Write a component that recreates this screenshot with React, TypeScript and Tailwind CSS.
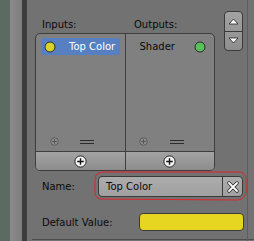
import React from 'react';

function PlusCircle({ small = false }: { small?: boolean }) {
    if (small) {
        return (
            <svg width="9" height="9" viewBox="0 0 9 9">
                <circle cx="4.5" cy="4.5" r="3.8" fill="#8a8a8a" stroke="#5e5e5e" strokeWidth="1" />
                <path d="M4.5 2.3v4.4M2.3 4.5h4.4" stroke="#555" strokeWidth="1" />
            </svg>
        );
    }
    return (
        <svg width="13" height="13" viewBox="0 0 13 13">
            <circle cx="6.5" cy="6.5" r="5.6" fill="#f4f4f4" stroke="#222" strokeWidth="1" />
            <path d="M6.5 3.2v6.6M3.2 6.5h6.6" stroke="#111" strokeWidth="1.4" />
        </svg>
    );
}

function Grip() {
    return (
        <div className="flex flex-col gap-[2px] w-[14px]">
            <div className="h-px bg-[#2e2e2e]" />
            <div className="h-px bg-[#2e2e2e]" />
        </div>
    );
}

function Socket({ color }: { color: string }) {
    return (
        <svg width="12" height="12" viewBox="0 0 12 12">
            <circle cx="6" cy="6" r="5" fill={color} stroke="#2a2a2a" strokeWidth="1" />
        </svg>
    );
}

function Column({ children, left }: { children: React.ReactNode; left?: boolean }) {
    return (
        <div className={`flex flex-col flex-1 ${left ? 'border-r border-[#3e3e3e]' : ''}`}>
            <div className="flex-1 flex flex-col pt-[4px] px-[5px]">
                {children}
                <div className="mt-auto mb-[5px] flex items-center">
                    <div className="w-[26px] flex justify-center"><PlusCircle small /></div>
                    <div className="flex-1 flex justify-center pr-[12px]"><Grip /></div>
                </div>
            </div>
            <div className="h-[19px] border-t border-[#3e3e3e] bg-gradient-to-b from-[#a3a3a3] to-[#8d8d8d] flex items-center justify-center">
                <PlusCircle />
            </div>
        </div>
    );
}

export default function App() {
    return (
        <div
            className="w-[254px] h-[241px] flex overflow-hidden text-[10px] text-[#0a0a0a] whitespace-nowrap"
            style={{ fontFamily: '"DejaVu Sans", sans-serif' }}
        >
            <div className="w-[10px] bg-[#5b6a63]" />
            <div className="w-[12px] bg-gradient-to-r from-[#8b8b8b] to-[#7e7e7e]" />
            <div className="w-[5px] bg-[#3c3c3c]" />

            <div className="flex-1 bg-[#727272] relative flex flex-col">
                <div className="flex pl-[8px] pt-[16px]">
                    <div className="w-[180px] flex flex-col">
                        <div className="flex h-[17px] pt-[2px] leading-[13px]">
                            <span className="w-[99px] pl-[7px]">Inputs:</span>
                            <span>Outputs:</span>
                        </div>
                        <div className="h-[138px] rounded-[5px] border border-[#3e3e3e] bg-[#808080] flex overflow-hidden">
                            <Column left>
                                <div className="h-[17px] rounded-[3px] bg-[#5680c2] flex items-center pl-[3px] text-white">
                                    <Socket color="#d8d22a" />
                                    <span className="ml-[13px]">Top Color</span>
                                </div>
                            </Column>
                            <Column>
                                <div className="h-[17px] flex items-center pl-[9px] pr-[3px] justify-between">
                                    <span>Shader</span>
                                    <Socket color="#58c15a" />
                                </div>
                            </Column>
                        </div>
                    </div>
                    <div className="ml-[9px] -mt-[5px] w-[19px] h-[40px] rounded-[4px] border border-[#3a3a3a] bg-gradient-to-b from-[#a2a2a2] to-[#8e8e8e] flex flex-col">
                        <div className="flex-1 flex items-center justify-center border-b border-[#3a3a3a]">
                            <svg width="11" height="7" viewBox="0 0 11 7">
                                <path d="M1 6L5.5 1L10 6Z" fill="#fff" stroke="#222" strokeWidth="0.8" />
                            </svg>
                        </div>
                        <div className="flex-1 flex items-center justify-center">
                            <svg width="11" height="7" viewBox="0 0 11 7">
                                <path d="M1 1L5.5 6L10 1Z" fill="#fff" stroke="#222" strokeWidth="0.8" />
                            </svg>
                        </div>
                    </div>
                </div>

                <div className="flex items-center pl-[15px] mt-[5px] h-[21px]">
                    <span className="w-[56px]">Name:</span>
                    <div className="w-[145px] h-[21px] rounded-[4px] border border-[#3a3a3a] bg-gradient-to-b from-[#acacac] to-[#a0a0a0] flex">
                        <span className="flex-1 pl-[7px] leading-[19px]">Top Color</span>
                        <div className="w-[20px] border-l border-[#3a3a3a] flex items-center justify-center">
                            <svg width="12" height="12" viewBox="0 0 12 12">
                                <path d="M2 2L10 10M10 2L2 10" stroke="#222" strokeWidth="3.2" strokeLinecap="round" />
                                <path d="M2 2L10 10M10 2L2 10" stroke="#fff" strokeWidth="1.8" strokeLinecap="round" />
                            </svg>
                        </div>
                    </div>
                </div>

                <div className="flex items-center pl-[15px] mt-[16px] h-[18px]">
                    <span className="w-[97px]">Default Value:</span>
                    <div className="w-[105px] h-[18px] rounded-[4px] border border-[#3a3a3a] bg-[#e6d521]" />
                </div>

                <div className="mt-auto mb-[1px] ml-[5px] h-px bg-[#4e4e4e]" />

                <svg className="absolute left-[66px] top-[170px]" width="155" height="32" viewBox="0 0 155 32">
                    <path
                        d="M6 3 Q2 4 2 10 L2 22 Q2 29 9 29 L145 30 Q152 29 153 22 L153 9 Q152 1 144 2 L12 2 Q7 2 6 3"
                        fill="none"
                        stroke="#e0242a"
                        strokeWidth="1"
                    />
                </svg>

                <div className="absolute right-[6px] top-0 bottom-0 w-px bg-[#5e5e5e]" />
            </div>
        </div>
    );
}
